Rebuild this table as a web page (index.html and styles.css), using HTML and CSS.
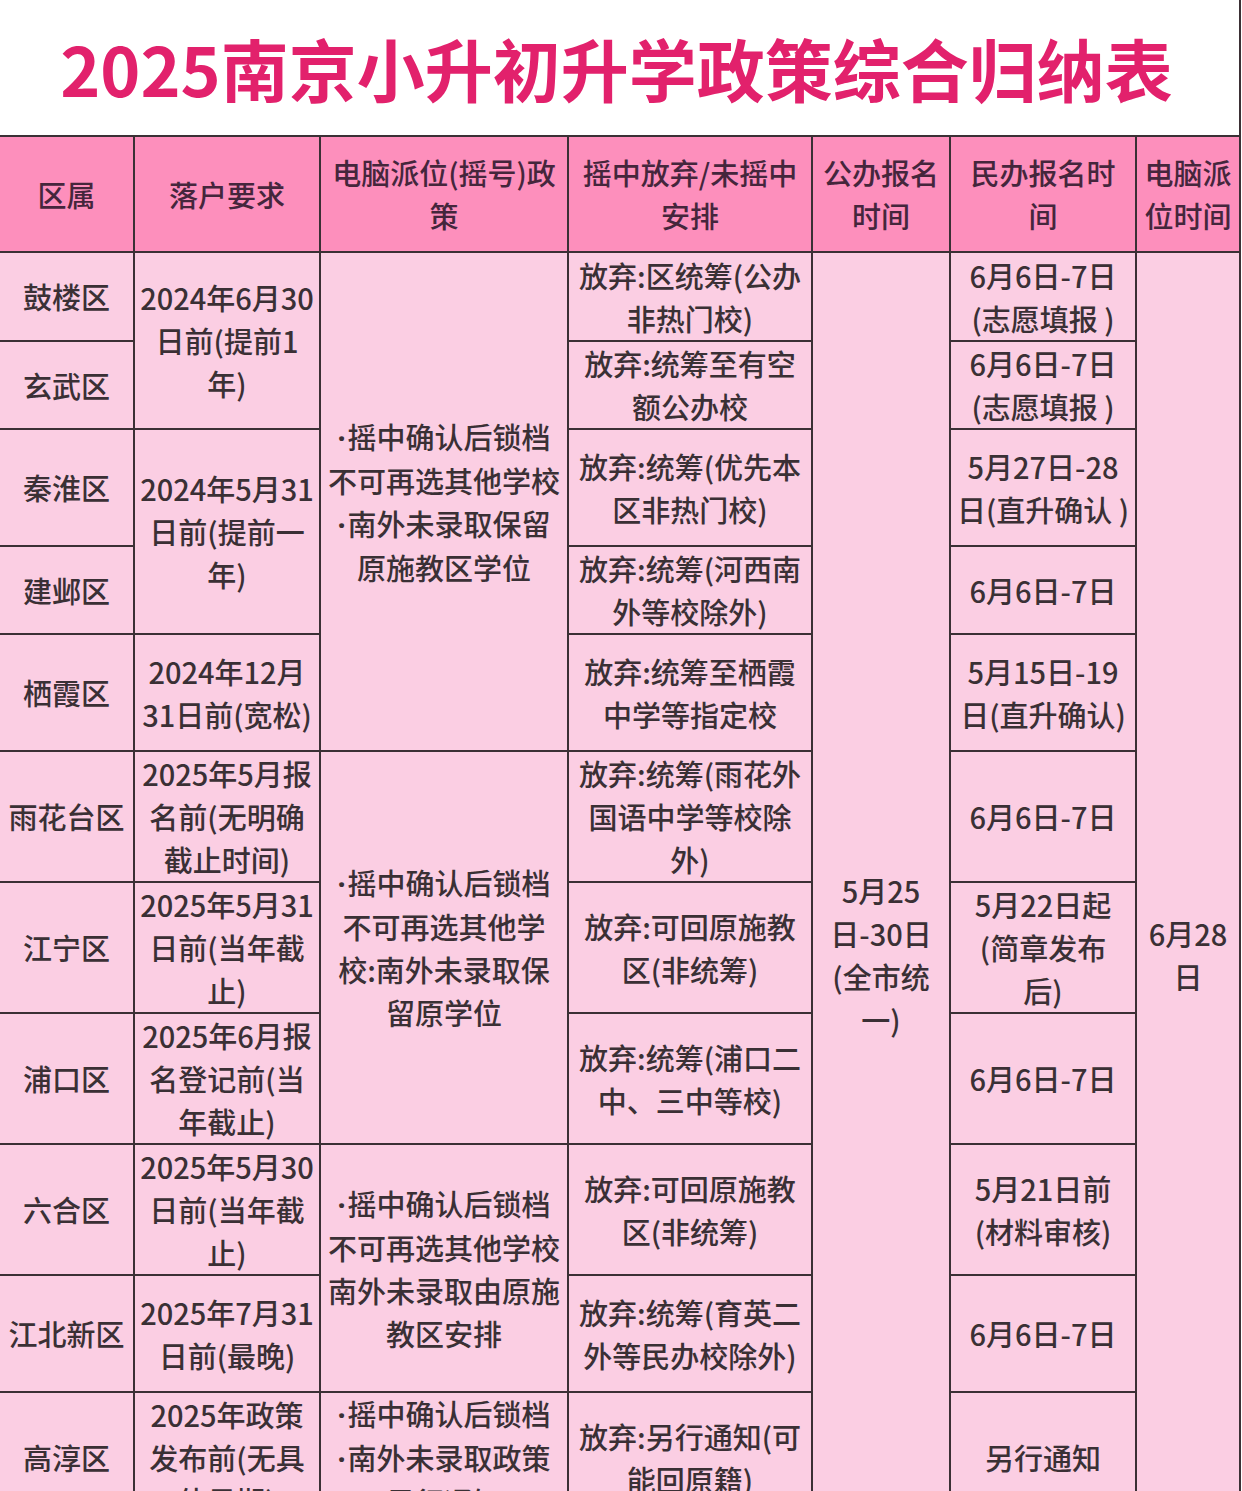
FILE: index.html
```html
<!DOCTYPE html>
<html lang="zh-CN">
<head>
<meta charset="utf-8">
<title>2025南京小升初升学政策综合归纳表</title>
<link rel="stylesheet" href="styles.css">
</head>
<body>
<div class="page">
  <h1 class="title">2025南京小升初升学政策综合归纳表</h1>
  <div class="grid">
    <div class="cell head">区属</div>
    <div class="cell head">落户要求</div>
    <div class="cell head">电脑派位(摇号)政<br>策</div>
    <div class="cell head">摇中放弃/未摇中<br>安排</div>
    <div class="cell head">公办报名<br>时间</div>
    <div class="cell head">民办报名时<br>间</div>
    <div class="cell head">电脑派<br>位时间</div>

    <div class="cell">鼓楼区</div>
    <div class="cell span2">2024年6月30<br>日前(提前1<br>年)</div>
    <div class="cell span5"><div class="txt"><span class="dot">·</span>摇中确认后锁档<br>不可再选其他学校<br><span class="dot">·</span>南外未录取保留<br>原施教区学位</div></div>
    <div class="cell">放弃:区统筹(公办<br>非热门校)</div>
    <div class="cell span12">5月25<br>日-30日<br>(全市统<br>一)</div>
    <div class="cell">6月6日-7日<br>(志愿填报 )</div>
    <div class="cell span12">6月28<br>日</div>

    <div class="cell">玄武区</div>
    <div class="cell">放弃:统筹至有空<br>额公办校</div>
    <div class="cell">6月6日-7日<br>(志愿填报 )</div>

    <div class="cell">秦淮区</div>
    <div class="cell span2">2024年5月31<br>日前(提前一<br>年)</div>
    <div class="cell">放弃:统筹(优先本<br>区非热门校)</div>
    <div class="cell">5月27日-28<br>日(直升确认 )</div>

    <div class="cell">建邺区</div>
    <div class="cell">放弃:统筹(河西南<br>外等校除外)</div>
    <div class="cell">6月6日-7日</div>

    <div class="cell">栖霞区</div>
    <div class="cell">2024年12月<br>31日前(宽松)</div>
    <div class="cell">放弃:统筹至栖霞<br>中学等指定校</div>
    <div class="cell">5月15日-19<br>日(直升确认)</div>

    <div class="cell">雨花台区</div>
    <div class="cell">2025年5月报<br>名前(无明确<br>截止时间)</div>
    <div class="cell span3"><div class="txt"><span class="dot">·</span>摇中确认后锁档<br>不可再选其他学<br>校:南外未录取保<br>留原学位</div></div>
    <div class="cell">放弃:统筹(雨花外<br>国语中学等校除<br>外)</div>
    <div class="cell">6月6日-7日</div>

    <div class="cell">江宁区</div>
    <div class="cell">2025年5月31<br>日前(当年截<br>止)</div>
    <div class="cell">放弃:可回原施教<br>区(非统筹)</div>
    <div class="cell">5月22日起<br>(简章发布<br>后)</div>

    <div class="cell">浦口区</div>
    <div class="cell">2025年6月报<br>名登记前(当<br>年截止)</div>
    <div class="cell">放弃:统筹(浦口二<br>中、三中等校)</div>
    <div class="cell">6月6日-7日</div>

    <div class="cell">六合区</div>
    <div class="cell">2025年5月30<br>日前(当年截<br>止)</div>
    <div class="cell span2"><div class="txt"><span class="dot">·</span>摇中确认后锁档<br>不可再选其他学校<br>南外未录取由原施<br>教区安排</div></div>
    <div class="cell">放弃:可回原施教<br>区(非统筹)</div>
    <div class="cell">5月21日前<br>(材料审核)</div>

    <div class="cell">江北新区</div>
    <div class="cell">2025年7月31<br>日前(最晚)</div>
    <div class="cell">放弃:统筹(育英二<br>外等民办校除外)</div>
    <div class="cell">6月6日-7日</div>

    <div class="cell">高淳区</div>
    <div class="cell">2025年政策<br>发布前(无具<br>体日期)</div>
    <div class="cell"><div class="txt"><span class="dot">·</span>摇中确认后锁档<br><span class="dot">·</span>南外未录取政策<br>另行通知</div></div>
    <div class="cell">放弃:另行通知(可<br>能回原籍)</div>
    <div class="cell">另行通知</div>

    <div class="cell">溧水区</div>
    <div class="cell">2025年政策<br>发布前(无具<br>体日期)</div>
    <div class="cell"><div class="txt"><span class="dot">·</span>摇中确认后锁档<br><span class="dot">·</span>南外未录取政策<br>另行通知</div></div>
    <div class="cell">放弃:另行通知(可<br>能回原籍)</div>
    <div class="cell">另行通知</div>
  </div>
</div>
</body>
</html>
```

FILE: styles.css
```css
html, body {
  margin: 0;
  padding: 0;
  background: #ffffff;
}

body {
  font-family: "Noto Sans CJK SC", "Noto Sans", sans-serif;
  color: #3a3035;
}

.page {
  width: 1242px;
}

.title {
  margin: 0;
  height: 135px;
  display: flex;
  align-items: center;
  justify-content: center;
  font-size: 68px;
  font-weight: 700;
  color: #e2216c;
  line-height: 1;
  border-right: 2px solid #3b3035;
  box-sizing: border-box;
  width: 1241px;
  padding-right: 6px;
}

.grid {
  display: grid;
  width: 1241px;
  grid-template-columns: 135px 186px 248px 244px 138px 186px 104px;
  grid-template-rows: 116px 89px 88px 117px 88px 117px 131px 131px 131px 131px 117px 131px 135px;
  border-top: 2px solid #3b3035;
  background: #fbcee3;
}

.cell {
  box-sizing: border-box;
  border-right: 2px solid #3b3035;
  border-bottom: 2px solid #3b3035;
  display: flex;
  align-items: center;
  justify-content: center;
  text-align: center;
  font-size: 29px;
  line-height: 43px;
  font-weight: 500;
  white-space: nowrap;
  background: #fbcee3;
}

.head {
  background: #fd8fbc;
  color: #45263c;
}

.txt {
  text-align: center;
}

.dot {
  font-family: "Noto Sans", "DejaVu Sans", sans-serif;
  font-weight: 700;
  padding-right: 2px;
}

.span2 { grid-row: span 2; }
.span3 { grid-row: span 3; }
.span5 { grid-row: span 5; }
.span12 { grid-row: span 12; }
```
